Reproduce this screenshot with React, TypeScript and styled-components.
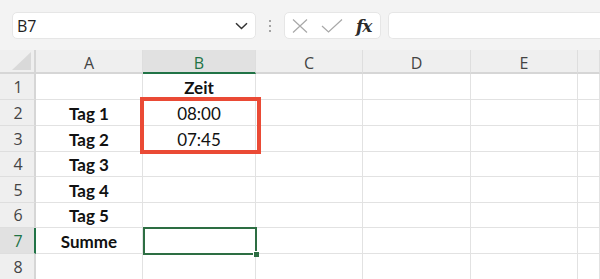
import React from "react";
import styled, { createGlobalStyle } from "styled-components";

const Global = createGlobalStyle`
  html, body { margin: 0; padding: 0; background: #f3f3f3; }
  body { font-family: "Open Sans", "Noto Sans", sans-serif; overflow: hidden; }
`;

const Page = styled.div`
  width: 600px;
  height: 279px;
  background: #f3f3f3;
  overflow: hidden;
`;

const Toolbar = styled.div`
  height: 50px;
  display: flex;
  align-items: flex-start;
  padding: 12px 0 0 12px;
  box-sizing: border-box;
`;

const NameBox = styled.div`
  width: 244px;
  height: 27px;
  box-sizing: border-box;
  background: #fff;
  border-radius: 5px;
  border: 1px solid #e6e6e6;
  display: flex;
  align-items: center;
  justify-content: space-between;
  padding: 0 7px 0 4px;
  font-size: 16px;
  color: #222;
`;

const Dots = styled.div`
  width: 28px;
  height: 27px;
  display: flex;
  flex-direction: column;
  align-items: center;
  justify-content: center;
  gap: 3px;
  span {
    width: 2px;
    height: 2px;
    border-radius: 1px;
    background: #8a8a8a;
  }
`;

const ButtonGroup = styled.div`
  width: 97px;
  height: 27px;
  box-sizing: border-box;
  background: #fff;
  border-radius: 5px;
  border: 1px solid #e6e6e6;
  display: flex;
  align-items: center;
  padding: 0 0 0 7px;
  gap: 13px;
`;

const Fx = styled.span`
  font-family: "DejaVu Serif", "Liberation Serif", serif;
  font-style: italic;
  font-weight: bold;
  font-size: 17px;
  color: #2b2b2b;
  letter-spacing: -1px;
`;

const FormulaBar = styled.div`
  flex: 1;
  margin-left: 7px;
  height: 27px;
  box-sizing: border-box;
  background: #fff;
  border-radius: 5px 0 0 5px;
  border: 1px solid #e6e6e6;
  border-right: none;
`;

const Sheet = styled.div`
  display: grid;
  grid-template-columns: 36px 107px 113px 107px 108px 107px 1fr;
  grid-template-rows: 24px 26px 26px 26px 25px 26px 25px 26px 26px;
  background: #fff;
`;

type Pos = { $r: number; $c: number };

const Corner = styled.div`
  grid-row: 1;
  grid-column: 1;
  background: #efefef;
  border-bottom: 2px solid #d6d6d6;
  border-right: 2px solid #d6d6d6;
  box-sizing: border-box;
  position: relative;
  &::after {
    content: "";
    position: absolute;
    right: 3px;
    bottom: 2px;
    width: 0;
    height: 0;
    border-left: 19px solid transparent;
    border-bottom: 18px solid #d9d9d9;
  }
`;

const ColHead = styled.div<{ $active?: boolean; $c: number }>`
  grid-row: 1;
  grid-column: ${(p) => p.$c};
  background: ${(p) => (p.$active ? "#e1e1e1" : "#efefef")};
  border-bottom: 2px solid ${(p) => (p.$active ? "#217346" : "#d6d6d6")};
  border-right: 1px solid #dedede;
  box-sizing: border-box;
  display: flex;
  align-items: center;
  justify-content: center;
  font-size: 16px;
  color: ${(p) => (p.$active ? "#217346" : "#444")};
  padding-top: 3px;
`;

const RowHead = styled.div<{ $active?: boolean; $r: number }>`
  grid-row: ${(p) => p.$r};
  grid-column: 1;
  background: ${(p) => (p.$active ? "#e1e1e1" : "#efefef")};
  border-right: 2px solid ${(p) => (p.$active ? "#217346" : "#d6d6d6")};
  border-bottom: 1px solid #dedede;
  box-sizing: border-box;
  display: flex;
  align-items: center;
  justify-content: center;
  font-size: 16px;
  color: ${(p) => (p.$active ? "#217346" : "#444")};
  padding-left: 2px;
`;

const Cell = styled.div<Pos & { $bold?: boolean }>`
  grid-row: ${(p) => p.$r};
  grid-column: ${(p) => p.$c};
  border-right: 1px solid #e2e2e2;
  border-bottom: 1px solid #e2e2e2;
  box-sizing: border-box;
  display: flex;
  align-items: center;
  justify-content: center;
  font-family: "Lato", "Carlito", sans-serif;
  font-size: 17px;
  font-weight: ${(p) => (p.$bold ? 700 : 400)};
  color: #111;
  padding-top: 1px;
`;

const Selected = styled.div`
  grid-column: 3;
  grid-row: 8;
  margin: -1px -1px -1px 0;
  border: 2px solid #2d6e43;
  position: relative;
  &::after {
    content: "";
    position: absolute;
    right: -4px;
    bottom: -4px;
    width: 5px;
    height: 5px;
    background: #2d6e43;
    border: 1px solid #fff;
    border-width: 1px 0 0 1px;
  }
`;

const Highlight = styled.div`
  grid-column: 3;
  grid-row: 3 / span 2;
  margin: -3px -5px -2px -3px;
  border: 4px solid #ea4a35;
  pointer-events: none;
`;

const cols = ["A", "B", "C", "D", "E", ""];
const data: Record<number, [string, boolean][]> = {
  1: [["", false], ["Zeit", true]],
  2: [["Tag 1", true], ["08:00", false]],
  3: [["Tag 2", true], ["07:45", false]],
  4: [["Tag 3", true]],
  5: [["Tag 4", true]],
  6: [["Tag 5", true]],
  7: [["Summe", true]],
  8: [],
};

export default function App() {
  return (
    <Page>
      <Global />
      <Toolbar>
        <NameBox>
          <span>B7</span>
          <svg width="13" height="8" viewBox="0 0 13 8">
            <path d="M1 1.2 L6.5 6.5 L12 1.2" fill="none" stroke="#333" strokeWidth="1.5" />
          </svg>
        </NameBox>
        <Dots>
          <span />
          <span />
          <span />
        </Dots>
        <ButtonGroup>
          <svg width="16" height="14" viewBox="0 0 16 14">
            <path d="M1 0.5 L15 13.5 M15 0.5 L1 13.5" stroke="#a8a8a8" strokeWidth="1.2" fill="none" />
          </svg>
          <svg width="22" height="14" viewBox="0 0 22 14">
            <path d="M1 7 L7.5 13 L21 0.5" stroke="#a8a8a8" strokeWidth="1.2" fill="none" />
          </svg>
          <Fx>fx</Fx>
        </ButtonGroup>
        <FormulaBar />
      </Toolbar>
      <Sheet>
        <Corner />
        {cols.map((c, i) => (
          <ColHead key={i} $c={i + 2} $active={c === "B"}>
            {c}
          </ColHead>
        ))}
        {[1, 2, 3, 4, 5, 6, 7, 8].map((r) => (
          <React.Fragment key={r}>
            <RowHead $r={r + 1} $active={r === 7}>
              {r}
            </RowHead>
            {cols.map((c, i) => {
              const v = data[r][i];
              return (
                <Cell key={c + i} $r={r + 1} $c={i + 2} $bold={v ? v[1] : false}>
                  {v ? v[0] : ""}
                </Cell>
              );
            })}
          </React.Fragment>
        ))}
        <Highlight />
        <Selected />
      </Sheet>
    </Page>
  );
}
